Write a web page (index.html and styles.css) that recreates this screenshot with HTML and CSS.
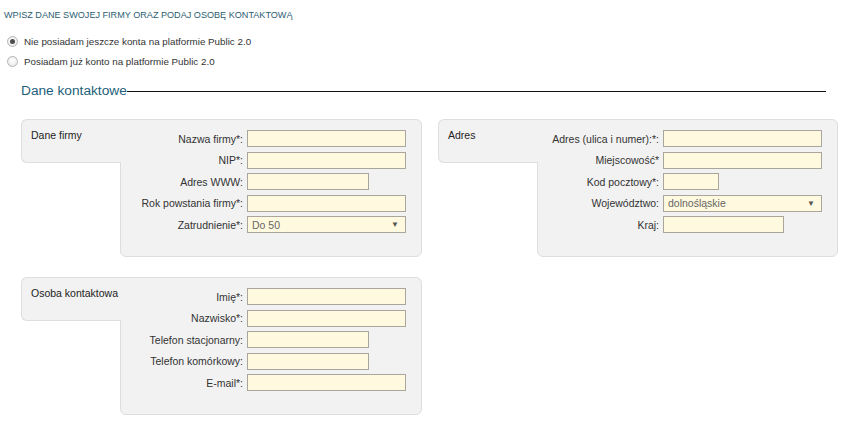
FILE: index.html
```html
<!DOCTYPE html>
<html lang="pl">
<head>
<meta charset="utf-8">
<title>Dane kontaktowe</title>
<link rel="stylesheet" href="styles.css">
</head>
<body>
<div class="page">
  <h1 class="title">WPISZ DANE SWOJEJ FIRMY ORAZ PODAJ OSOBĘ KONTAKTOWĄ</h1>
  <div class="choices">
    <label class="choice"><span class="radio checked"></span>Nie posiadam jeszcze konta na platformie Public 2.0</label>
    <label class="choice"><span class="radio"></span>Posiadam już konto na platformie Public 2.0</label>
  </div>
  <section class="contact">
    <div class="legend"><span class="legend-text">Dane kontaktowe</span><span class="rule"></span></div>
    <div class="boxes">
      <div class="box">
        <div class="tab">Dane firmy</div>
        <div class="main">
          <span class="lbl">Nazwa firmy*:</span><span class="inp"></span>
          <span class="lbl">NIP*:</span><span class="inp"></span>
          <span class="lbl">Adres WWW:</span><span class="inp short"></span>
          <span class="lbl">Rok powstania firmy*:</span><span class="inp"></span>
          <span class="lbl">Zatrudnienie*:</span><span class="inp sel"><span>Do 50</span><span class="arrow">▼</span></span>
        </div>
      </div>
      <div class="box">
        <div class="tab">Adres</div>
        <div class="main">
          <span class="lbl">Adres (ulica i numer):*:</span><span class="inp"></span>
          <span class="lbl">Miejscowość*</span><span class="inp"></span>
          <span class="lbl">Kod pocztowy*:</span><span class="inp zip"></span>
          <span class="lbl">Województwo:</span><span class="inp sel"><span>dolnośląskie</span><span class="arrow">▼</span></span>
          <span class="lbl">Kraj:</span><span class="inp country"></span>
        </div>
      </div>
      <div class="box">
        <div class="tab">Osoba kontaktowa</div>
        <div class="main">
          <span class="lbl">Imię*:</span><span class="inp"></span>
          <span class="lbl">Nazwisko*:</span><span class="inp"></span>
          <span class="lbl">Telefon stacjonarny:</span><span class="inp short"></span>
          <span class="lbl">Telefon komórkowy:</span><span class="inp short"></span>
          <span class="lbl">E-mail*:</span><span class="inp"></span>
        </div>
      </div>
    </div>
  </section>
</div>
</body>
</html>
```
FILE: styles.css
```css
html, body {
  margin: 0;
  padding: 0;
  background: #ffffff;
}
body {
  font-family: "Liberation Sans", Arial, sans-serif;
  font-size: 10.5px;
  color: #333333;
}
.page {
  padding: 9px 0 0 4px;
}
.title {
  margin: 0;
  font-size: 9.1px;
  font-weight: normal;
  color: #2a5d72;
  line-height: 12px;
}
.choices {
  margin-top: 14px;
  display: flex;
  flex-direction: column;
  gap: 7px;
}
.choice {
  display: flex;
  align-items: center;
  gap: 6px;
  padding-left: 3px;
  line-height: 13px;
  font-size: 9.8px;
  color: #333;
}
.radio {
  width: 11px;
  height: 11px;
  box-sizing: border-box;
  border: 1px solid #b4b4b4;
  border-radius: 50%;
  background: radial-gradient(circle at 50% 40%, #ffffff 0%, #e4e4e4 100%);
  display: flex;
  align-items: center;
  justify-content: center;
}
.radio.checked::after {
  content: "";
  width: 5px;
  height: 5px;
  border-radius: 50%;
  background: #4d4d4d;
}
.contact {
  margin: 14px 0 0 17px;
  width: 805px;
}
.legend {
  display: flex;
  align-items: center;
}
.legend-text {
  font-size: 13.7px;
  color: #235f7a;
  line-height: 18px;
}
.rule {
  flex: 1;
  height: 1px;
  background: #111;
  margin-top: 1px;
}
.boxes {
  margin-top: 19px;
  display: grid;
  grid-template-columns: 401px 400px;
  column-gap: 16px;
  row-gap: 20px;
}
.box {
  display: flex;
  align-items: flex-start;
}
.tab {
  width: 100px;
  height: 44px;
  box-sizing: border-box;
  flex: none;
  background: #f2f2f2;
  border: 1px solid #dedede;
  border-right: 0;
  border-radius: 6px 0 0 6px;
  padding: 9px 0 0 9px;
  margin-right: -1px;
  position: relative;
  z-index: 1;
  color: #222;
  white-space: nowrap;
}
.main {
  flex: 1;
  background: #f2f2f2;
  border: 1px solid #dedede;
  border-radius: 0 6px 6px 6px;
  padding: 10px 15px 23px 0;
  display: grid;
  grid-template-columns: 1fr 159px;
  column-gap: 4px;
  row-gap: 4.5px;
  align-items: center;
}
.lbl {
  text-align: right;
  white-space: nowrap;
  color: #333;
}
.inp {
  display: flex;
  align-items: center;
  justify-content: space-between;
  box-sizing: border-box;
  height: 17px;
  width: 159px;
  background: #fff9df;
  border: 1px solid #aaa59d;
  padding: 0 6px 0 4px;
  color: #666;
}
.inp.short { width: 122px; }
.inp.zip { width: 56px; }
.inp.country { width: 121px; }
.arrow {
  font-size: 8px;
  color: #555;
}
```
